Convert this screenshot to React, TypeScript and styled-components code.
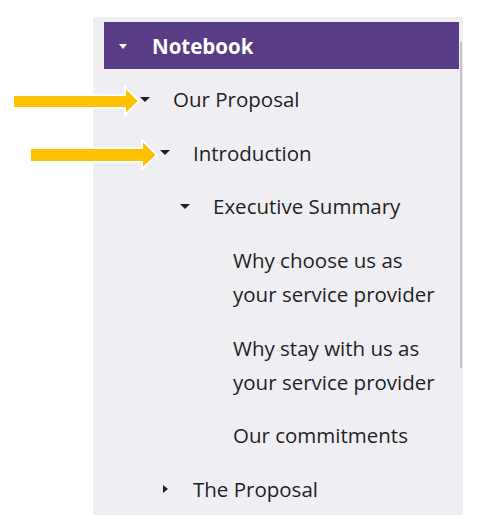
import React from "react";
import styled, { createGlobalStyle } from "styled-components";

const Global = createGlobalStyle`
  html, body { margin: 0; padding: 0; background: #ffffff; }
  body { font-family: "Open Sans", "Noto Sans", sans-serif; }
`;

const Page = styled.div`
  position: relative;
  width: 485px;
  height: 525px;
  padding: 17px 0 0 93px;
  box-sizing: border-box;
`;

const Panel = styled.div`
  position: relative;
  width: 370px;
  height: 498px;
  background: #efeef3;
  padding: 5px 4px 0 11px;
  box-sizing: border-box;
  display: flex;
  flex-direction: column;
  overflow: hidden;
`;

const Scroll = styled.div`
  position: absolute;
  right: 1px;
  top: 25px;
  width: 2px;
  height: 326px;
  background: #c4c4c8;
`;

const Header = styled.div`
  flex: 0 0 47px;
  background: #583d84;
  display: flex;
  align-items: center;
  padding-left: 15px;
  margin-bottom: 3px;
  color: #ffffff;
  font-weight: 700;
  font-size: 20.5px;
`;

const HeaderCaret = styled.span`
  width: 0;
  height: 0;
  border-left: 4px solid transparent;
  border-right: 4px solid transparent;
  border-top: 5px solid #ffffff;
  margin-right: 25px;
  margin-top: 1px;
`;

const Row = styled.div<{ $level: number }>`
  flex: 0 0 auto;
  display: flex;
  align-items: flex-start;
  padding: 10px 4px 9.7px ${(p) => 36 + p.$level * 20}px;
  font-size: 20.5px;
  line-height: 34px;
  color: #1f1f24;
`;

const CaretBox = styled.span`
  flex: 0 0 33px;
  height: 34px;
  display: flex;
  align-items: center;
`;

const Caret = styled.span<{ $open: boolean }>`
  width: 0;
  height: 0;
  ${(p) =>
    p.$open
      ? `border-left: 5px solid transparent;
         border-right: 5px solid transparent;
         border-top: 5.5px solid #1f1f24;`
      : `border-top: 4.5px solid transparent;
         border-bottom: 4.5px solid transparent;
         border-left: 5.5px solid #1f1f24;
         margin-left: 3px;`}
`;

const Label = styled.span`
  max-width: 212px;
  white-space: normal;
`;

const ArrowLayer = styled.svg`
  position: absolute;
  left: 0;
  top: 0;
  pointer-events: none;
`;

type Item = { label: string; level: number; caret?: "open" | "closed" };

const items: Item[] = [
  { label: "Our Proposal", level: 0, caret: "open" },
  { label: "Introduction", level: 1, caret: "open" },
  { label: "Executive Summary", level: 2, caret: "open" },
  { label: "Why choose us as your service provider", level: 3 },
  { label: "Why stay with us as your service provider", level: 3 },
  { label: "Our commitments", level: 3 },
  { label: "The Proposal", level: 1, caret: "closed" },
];

export default function App() {
  return (
    <>
      <Global />
      <Page>
        <Panel>
          <Scroll />
          <Header>
            <HeaderCaret />
            Notebook
          </Header>
          {items.map((it) => (
            <Row key={it.label} $level={it.level}>
              {it.caret ? (
                <CaretBox>
                  <Caret $open={it.caret === "open"} />
                </CaretBox>
              ) : (
                <CaretBox />
              )}
              <Label>{it.label}</Label>
            </Row>
          ))}
        </Panel>
        <ArrowLayer width="485" height="525" viewBox="0 0 485 525">
          <polygon
            points="13,95 125,95 125,87 139,101 125,115 125,108 13,108"
            fill="#ffc000"
            stroke="#ffffff"
            strokeWidth="2"
            strokeLinejoin="miter"
          />
          <polygon
            points="30,148 142,148 142,140 157,155 142,169 142,162 30,162"
            fill="#ffc000"
            stroke="#ffffff"
            strokeWidth="2"
            strokeLinejoin="miter"
          />
        </ArrowLayer>
      </Page>
    </>
  );
}
